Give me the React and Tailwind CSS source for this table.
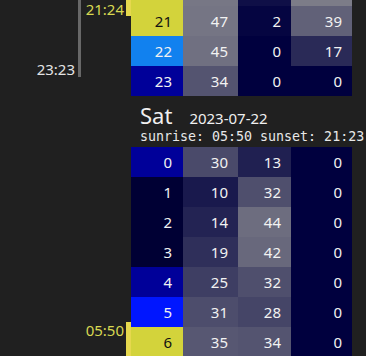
import React from 'react';

const ROW_H = 30;

const HOUR_COLORS = {
  sun: '#d3d33b',
  dusk: '#1181ef',
  twilight: '#000099',
  dawn: '#0016ff',
  night: '#000034',
};

// scale a reading from deep navy (0) to muted grey (50+)
const cellColor = (v) => {
  const t = Math.min(v / 50, 1);
  const r = Math.round(t * 124);
  const b = Math.round(62 + t * 74);
  return `rgb(${r},${r},${b})`;
};

const days = [
  {
    key: 'fri',
    rows: [
      { h: 20, tone: 'sun', vals: [48, 6, 52] },
      { h: 21, tone: 'sun', vals: [47, 2, 39] },
      { h: 22, tone: 'dusk', vals: [45, 0, 17] },
      { h: 23, tone: 'twilight', vals: [34, 0, 0] },
    ],
    markers: [
      { kind: 'bar', top: -200, height: 301 },
      { kind: 'label', text: '23:23', top: 84, right: 56, color: 'text-[#e4e4e4]' },
      { kind: 'strip', top: -200, height: 240 },
      { kind: 'label', text: '21:24', top: 24, right: 7, color: 'text-[#d8d852]' },
    ],
  },
  {
    key: 'sat',
    name: 'Sat',
    date: '2023-07-22',
    sun: 'sunrise: 05:50 sunset: 21:23',
    rows: [
      { h: 0, tone: 'twilight', vals: [30, 13, 0] },
      { h: 1, tone: 'night', vals: [10, 32, 0] },
      { h: 2, tone: 'night', vals: [14, 44, 0] },
      { h: 3, tone: 'night', vals: [19, 42, 0] },
      { h: 4, tone: 'twilight', vals: [25, 32, 0] },
      { h: 5, tone: 'dawn', vals: [31, 28, 0] },
      { h: 6, tone: 'sun', vals: [35, 34, 0] },
      { h: 7, tone: 'sun', vals: [38, 36, 0] },
    ],
    markers: [
      { kind: 'strip', top: 175, height: 400 },
      { kind: 'label', text: '05:50', top: 174, right: 7, color: 'text-[#d8d852]' },
    ],
  },
];

function Marker({ m }) {
  if (m.kind === 'bar') {
    return <div className="absolute left-[78px] w-[3px] bg-[#686868]" style={{ top: m.top, height: m.height }} />;
  }
  if (m.kind === 'strip') {
    return <div className="absolute left-[126px] w-[5px] bg-[#e6d84e]" style={{ top: m.top, height: m.height }} />;
  }
  return (
    <span className={`absolute text-[15px] leading-[18px] ${m.color}`} style={{ top: m.top, right: m.right }}>
      {m.text}
    </span>
  );
}

function HourRow({ row }) {
  const dark = row.tone === 'sun';
  return (
    <div className="flex h-[30px] text-[15px]">
      <div
        className={`w-[52px] flex items-center justify-end pr-[11px] ${dark ? 'text-[#111]' : 'text-[#f2f2f2]'}`}
        style={{ backgroundColor: HOUR_COLORS[row.tone] }}
      >
        {row.h}
      </div>
      {row.vals.map((v, i) => (
        <div
          key={i}
          className={`flex items-center justify-end pr-[10px] text-[#f2f2f2] ${i === 0 ? 'w-[55px]' : i === 1 ? 'w-[53px]' : 'w-[61px]'}`}
          style={{ backgroundColor: cellColor(v) }}
        >
          {v}
        </div>
      ))}
    </div>
  );
}

function Day({ day }) {
  return (
    <div>
      {day.name && (
        <div className="ml-[131px] pl-[9px] pt-[6px] h-[51px] text-[#f0f0f0]">
          <div className="flex items-baseline">
            <span className="text-[22px] leading-[26px]">{day.name}</span>
            <span className="ml-[17px] text-[15px] leading-[26px]">{day.date}</span>
          </div>
          <div className="-mt-[2px] font-['DejaVu_Sans_Mono',monospace] text-[13.3px] leading-[16px] text-[#e8e8e8]">
            {day.sun}
          </div>
        </div>
      )}
      <div className="flex">
        <div className="relative w-[131px] shrink-0" style={{ height: day.rows.length * ROW_H }}>
          {day.markers.map((m, i) => (
            <Marker key={i} m={m} />
          ))}
        </div>
        <div className="flex flex-col">
          {day.rows.map((r) => (
            <HourRow key={r.h} row={r} />
          ))}
        </div>
      </div>
    </div>
  );
}

export default function App() {
  return (
    <div className="w-[366px] h-[356px] overflow-hidden bg-[#202020] font-['Noto_Sans',sans-serif]">
      <div className="-mt-[24px]">
        {days.map((d) => (
          <Day key={d.key} day={d} />
        ))}
      </div>
    </div>
  );
}
